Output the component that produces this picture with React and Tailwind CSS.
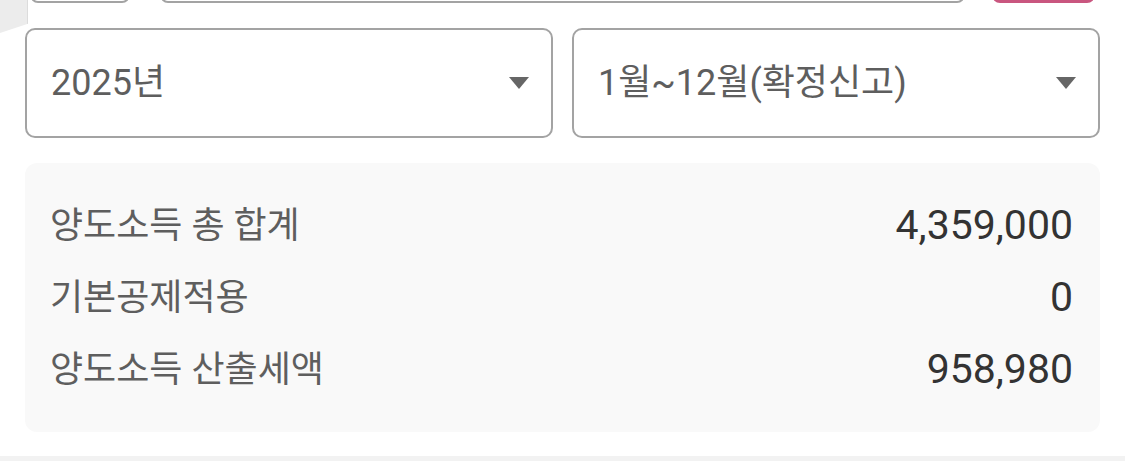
import { useState } from 'react'

// ── Dropdown field ──────────────────────────────────────────────────────────
function SelectBox({ value }) {
  return (
    <div className="h-[110px] rounded-[10px] border-2 border-[#a3a3a3] bg-white flex items-center justify-between pl-[24px] pr-[23px]">
      <span className="text-[36px] text-[#5e5e5e]">{value}</span>
      <svg width="20" height="12" viewBox="0 0 20 12" className="mr-[-1px]">
        <path d="M0 0 H20 L10 12 Z" fill="#666666" />
      </svg>
    </div>
  )
}

// ── Summary row ─────────────────────────────────────────────────────────────
function Row({ label, value }) {
  return (
    <div className="h-[72px] flex items-center justify-between">
      <span className="text-[36px] text-[#5e5e5e]">{label}</span>
      <span className="text-[41px] text-[#333333]">{value}</span>
    </div>
  )
}

export default function App() {
  const [year] = useState('2025년')
  const [period] = useState('1월~12월(확정신고)')

  const rows = [
    { label: '양도소득 총 합계', value: '4,359,000' },
    { label: '기본공제적용', value: '0' },
    { label: '양도소득 산출세액', value: '958,980' },
  ]

  return (
    <div
      className="relative w-[1125px] h-[461px] overflow-hidden bg-white"
      style={{ fontFamily: 'Roboto, "Noto Sans CJK KR", sans-serif' }}
    >
      {/* floating tab peeking at top-left */}
      <div className="absolute left-0 top-0 w-[28px] h-[33px] bg-[#ececec] border-r border-[#dcdcdc] rounded-br-[6px] [clip-path:polygon(0_0,100%_0,100%_72%,0_100%)]" />

      {/* previous row, scrolled off */}
      <div className="flex h-[3px] items-end">
        <div className="ml-[30px] w-[100px] h-[40px] rounded-[8px] border-2 border-[#a3a3a3]" />
        <div className="ml-[30px] w-[805px] h-[40px] rounded-[8px] border-2 border-[#a3a3a3]" />
        <div className="ml-[27px] w-[103px] h-[40px] rounded-[8px] bg-[#c9567f]" />
      </div>

      {/* period selectors */}
      <div className="grid grid-cols-2 gap-[19px] px-[25px] mt-[25px]">
        <SelectBox value={year} />
        <SelectBox value={period} />
      </div>

      {/* summary */}
      <div className="mx-[25px] mt-[25px] h-[269px] rounded-[12px] bg-[#f9f9f9] pl-[25px] pr-[27px] py-[27px]">
        {rows.map((r) => (
          <Row key={r.label} label={r.label} value={r.value} />
        ))}
      </div>

      <div className="mt-[24px] h-[10px] bg-[#f2f2f2]" />
    </div>
  )
}
